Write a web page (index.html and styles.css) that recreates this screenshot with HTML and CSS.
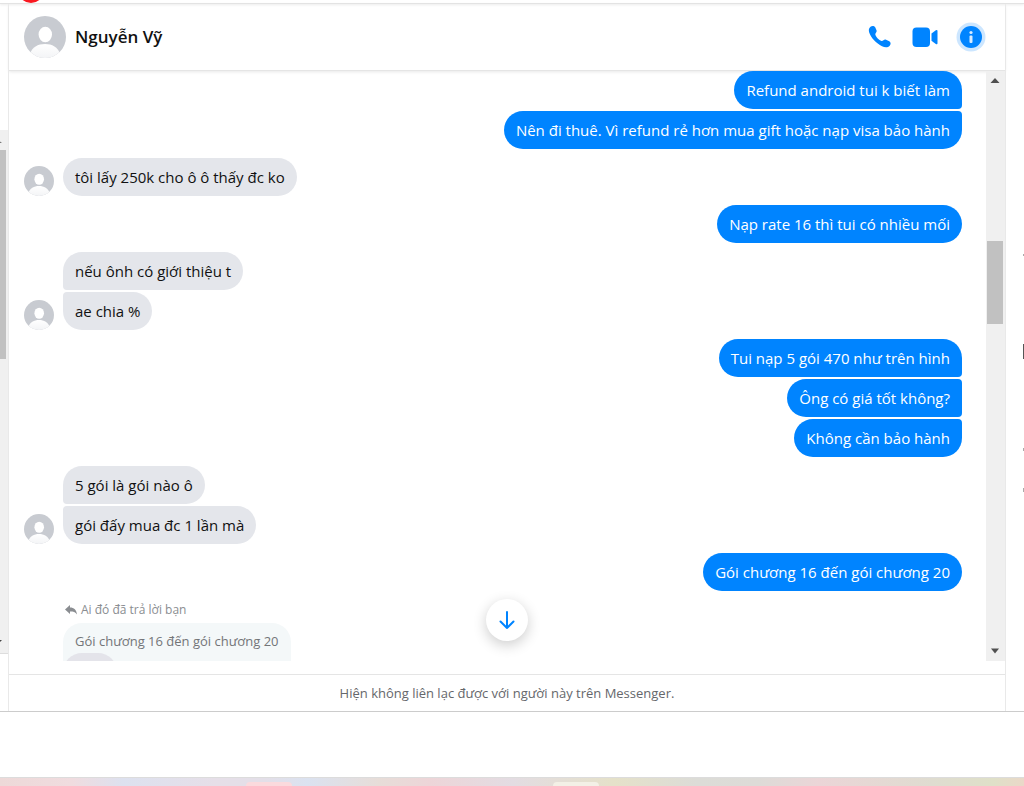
FILE: index.html
```html
<!DOCTYPE html>
<html lang="vi">
<head>
<meta charset="utf-8">
<title>Messenger</title>
<link rel="stylesheet" href="styles.css">
</head>
<body>
<svg class="defs" aria-hidden="true">
  <defs>
    <linearGradient id="body-fade" x1="0" y1="0" x2="0" y2="1">
      <stop offset="0" stop-color="#fff"/><stop offset="1" stop-color="#f3f4f6"/>
    </linearGradient>
    <symbol id="person" viewBox="0 0 42 42">
      <clipPath id="disc"><circle cx="21" cy="21" r="21"/></clipPath>
      <g clip-path="url(#disc)">
        <rect width="42" height="42" fill="#c8cbd1"/>
        <ellipse cx="21.300" cy="18.500" rx="6.700" ry="7.800" fill="#fff"/>
        <path d="M6 42V38C8 31 14 28 21 28S34 31 36 38V42Z" fill="url(#body-fade)"/>
      </g>
    </symbol>
  </defs>
</svg>
<div class="page">
  <div class="topbar"><span class="badge"></span></div>
  <div class="workspace">
    <aside class="sidebar">
      <div class="side-scroll">
        <svg class="side-arrow" viewBox="0 0 6 20"><path d="M0 11.500L2 13H0Z" fill="#777"/></svg>
        <div class="side-thumb"></div>
        <svg class="side-arrow side-arrow-end" viewBox="0 0 6 20"><path d="M0 7H2L0 9Z" fill="#444"/></svg>
      </div>
    </aside>
    <main class="chat">
      <header class="chat-header">
        <svg class="avatar-large"><use href="#person"/></svg>
        <h1 class="name">Nguyễn Vỹ</h1>
        <div class="actions">
          <button class="action" aria-label="Gọi thoại"><svg width="28" height="28" viewBox="0 0 28 28"><path d="M4.500 3.800C6 2.500 8.200 2.800 9.200 4.300L10.600 7.500C11.200 8.900 9.100 10.200 9.300 11.500C10 14.300 13 17.200 15.500 18C17 18.300 18 16.200 19.500 16.600L23.300 18.300C25 19.300 25 21.200 23.700 22.700C21.800 24.800 18.800 24.600 16 23.200C10.200 20.400 5 14.800 3.200 9.500C2.500 7.200 2.700 5.200 4.500 3.800Z" fill="#0084ff"/></svg></button>
          <button class="action" aria-label="Gọi video"><svg width="28" height="28" viewBox="0 0 28 28"><rect x="1.500" y="4.500" width="17.500" height="19.500" rx="4" fill="#0084ff"/><path d="M20.500 10.500L24.800 7.200Q26.500 6.300 26.500 8V20.300Q26.500 22 24.800 21L20.500 17.800Z" fill="#0084ff"/></svg></button>
          <button class="action" aria-label="Thông tin"><svg width="30" height="30" viewBox="0 0 30 30"><circle cx="15" cy="15" r="14.500" fill="#cce6ff"/><circle cx="15" cy="15" r="11" fill="#0084ff"/><circle cx="15" cy="10.500" r="1.600" fill="#d9ecff"/><rect x="13.500" y="13.500" width="3" height="7.500" rx="1" fill="#d9ecff"/></svg></button>
        </div>
      </header>
      <div class="history">
        <div class="messages">
          <section class="group sent">
            <p class="bubble">Refund android tui k biết làm</p>
            <p class="bubble">Nên đi thuê. Vì refund rẻ hơn mua gift hoặc nạp visa bảo hành</p>
          </section>
          <section class="group received">
            <svg class="avatar"><use href="#person"/></svg>
            <div class="stack"><p class="bubble">tôi lấy 250k cho ô ô thấy đc ko</p></div>
          </section>
          <section class="group sent"><p class="bubble">Nạp rate 16 thì tui có nhiều mối</p></section>
          <section class="group received">
            <svg class="avatar"><use href="#person"/></svg>
            <div class="stack"><p class="bubble">nếu ônh có giới thiệu t</p><p class="bubble">ae chia %</p></div>
          </section>
          <section class="group sent">
            <p class="bubble">Tui nạp 5 gói 470 như trên hình</p>
            <p class="bubble">Ông có giá tốt không?</p>
            <p class="bubble">Không cần bảo hành</p>
          </section>
          <section class="group received">
            <svg class="avatar"><use href="#person"/></svg>
            <div class="stack"><p class="bubble">5 gói là gói nào ô</p><p class="bubble">gói đấy mua đc 1 lần mà</p></div>
          </section>
          <section class="group sent"><p class="bubble">Gói chương 16 đến gói chương 20</p></section>
          <section class="reply">
            <p class="reply-label"><svg width="12" height="10" viewBox="0 0 12 10"><path d="M5 0V2.500C9 2.500 11.500 5 12 9.500C10.300 7 8.500 6.500 5 6.500V9L0 4.500Z" fill="#8a8d91"/></svg>Ai đó đã trả lời bạn</p>
            <p class="quote">Gói chương 16 đến gói chương 20</p>
            <div class="reply-bubble"></div>
          </section>
        </div>
        <div class="scrollbar">
          <svg class="arrow" viewBox="0 0 18 20"><path d="M4.500 12L9 7L13.500 12Z" fill="#505050"/></svg>
          <div class="track"><div class="thumb"></div></div>
          <svg class="arrow" viewBox="0 0 18 20"><path d="M5 7.500H13L9 12.500Z" fill="#505050"/></svg>
        </div>
        <button class="jump" aria-label="Cuộn xuống"><svg width="20" height="20" viewBox="0 0 20 20" fill="none" stroke="#0084ff" stroke-width="2" stroke-linecap="round" stroke-linejoin="round"><path d="M10 2V18M3.500 11.500L10 18L16.500 11.500"/></svg></button>
      </div>
      <footer class="notice">Hiện không liên lạc được với người này trên Messenger.</footer>
    </main>
    <aside class="details">
      <svg width="2" height="260" viewBox="0 0 2 260"><path d="M1 14H2V16H1ZM1 208H2V211H1ZM1 248H2V252H1Z" fill="#aaa"/><path d="M1 104H2V119H1Z" fill="#555"/></svg>
    </aside>
  </div>
  <div class="blank"></div>
  <div class="taskbar"><span class="tab tab-pink"></span><span class="tab tab-cream"></span></div>
</div>
</body>
</html>
```
FILE: styles.css
```css
* { box-sizing: border-box; }
body { margin: 0; background: #fff; font-family: "Open Sans", "Noto Sans", sans-serif; color: #111; }
p, h1 { margin: 0; }
button { padding: 0; border: 0; background: none; cursor: pointer; }
svg { display: block; flex: none; }
.defs { position: absolute; width: 0; height: 0; }

.page { display: flex; flex-direction: column; height: 100vh; overflow: hidden; }
.topbar { position: relative; flex: none; height: 4px; border-bottom: 1px solid #e3e3e3; box-shadow: 0 1px 3px #ececec; }
.badge { position: absolute; left: 18px; bottom: 0; width: 26px; height: 26px; border-radius: 50%; background: #f91820; }
.workspace { display: flex; flex: 1; min-height: 0; border-bottom: 1px solid #ccc; }

.sidebar { flex: none; width: 8px; padding: 126px 0 57px; }
.side-scroll { display: flex; flex-direction: column; height: 100%; background: #f0f0f0; border-bottom: 1px solid #ddd; }
.side-arrow { width: 6px; height: 20px; }
.side-arrow-end { margin-top: auto; }
.side-thumb { width: 6px; height: 40%; background: #c1c1c1; }

.chat { display: flex; flex: 1; flex-direction: column; min-width: 0; border: solid #e9e9e9; border-width: 0 1px; }
.chat-header { display: flex; align-items: center; flex: none; height: 67px; padding: 0 19px 0 15px; border-bottom: 1px solid #e5e5e5; box-shadow: 0 1px 3px #e8e8e8; }
.avatar-large { width: 42px; height: 42px; }
.name { margin-left: 9px; font-size: 17px; font-weight: 600; line-height: 24px; }
.actions { display: flex; align-items: center; gap: 17px; margin-left: auto; }
.action { display: flex; }

.history { position: relative; display: flex; flex: 1; min-height: 0; margin-bottom: 13px; }
.messages { display: flex; flex: 1; flex-direction: column; gap: 9px; min-width: 0; padding: 0 24px 0 15px; overflow: hidden; }
.group { display: flex; flex: none; gap: 9px; }
.sent { flex-direction: column; align-items: flex-end; gap: 2px; }
.received { align-items: flex-end; }
.stack { display: flex; flex-direction: column; align-items: flex-start; gap: 2px; }
.avatar { width: 30px; height: 30px; }
.bubble { padding: 8px 12px; border-radius: 19px; font-size: 15px; line-height: 22px; }
.sent .bubble { background: #0084ff; color: #fff; }
.received .bubble { background: #e4e6eb; }
.sent .bubble:not(:last-child) { border-bottom-right-radius: 4px; }
.sent .bubble:not(:first-child) { border-top-right-radius: 4px; }
.received .bubble:not(:last-child) { border-bottom-left-radius: 4px; }
.received .bubble:not(:first-child) { border-top-left-radius: 4px; }

.reply { display: flex; flex-direction: column; flex: none; align-items: flex-start; padding: 1px 0 0 39px; }
.reply-label { display: flex; align-items: center; gap: 4px; padding-left: 2px; margin-bottom: 4px; font-size: 12px; line-height: 18px; color: #8a8d91; }
.quote { padding: 8px 12px 22px; border-radius: 19px 19px 0 0; background: #f4f8f9; font-size: 13px; line-height: 20px; color: #737578; }
.reply-bubble { width: 54px; height: 38px; margin-top: -20px; border-radius: 19px; background: #e4e4ea; }

.scrollbar { display: flex; flex: none; flex-direction: column; width: 19px; background: #f0f0f0; }
.arrow { width: 18px; height: 20px; }
.track { display: flex; flex-direction: column; flex: 1; padding: 0 2px 0 1px; }
.track::before { content: ""; flex: 150; }
.track::after { content: ""; flex: 317; }
.thumb { flex: 83; background: #c1c1c1; }
.jump { position: absolute; bottom: 20px; left: 50%; display: grid; place-items: center; width: 42px; height: 42px; margin-left: -21px; border-radius: 50%; background: #fff; box-shadow: 0 4px 14px rgba(0, 0, 0, 0.2); }
.notice { flex: none; padding: 9px 0 8px; border-top: 1px solid #e5e5e5; font-size: 13px; line-height: 19px; text-align: center; color: #65676b; }

.details { display: flex; flex: none; justify-content: flex-end; width: 18px; padding-top: 236px; }
.blank { flex: none; height: 65px; }
.taskbar { position: relative; flex: none; height: 9px; border-top: 1px solid #dcdcdc; background: linear-gradient(90deg, #edd9d8, #f0dcdf 7%, #dde1ef 12%, #e6dfe8 21%, #e3dfe8 26%, #dbe2f0 30%, #e7ddd8 37%, #edd5d8 42%, #e3dce2 50%, #e5e1c9 60%, #dcdcd7 68%, #dddbd7 74%, #ebd5d7 80%, #dfdcd0 91%, #dfe0c8 97%, #ead8c8); }
.tab { position: absolute; bottom: 0; width: 46px; height: 4px; border-radius: 4px 4px 0 0; }
.tab-pink { left: 24%; background: #fbdadd; }
.tab-cream { left: 54%; background: #f3f0e6; }
```
